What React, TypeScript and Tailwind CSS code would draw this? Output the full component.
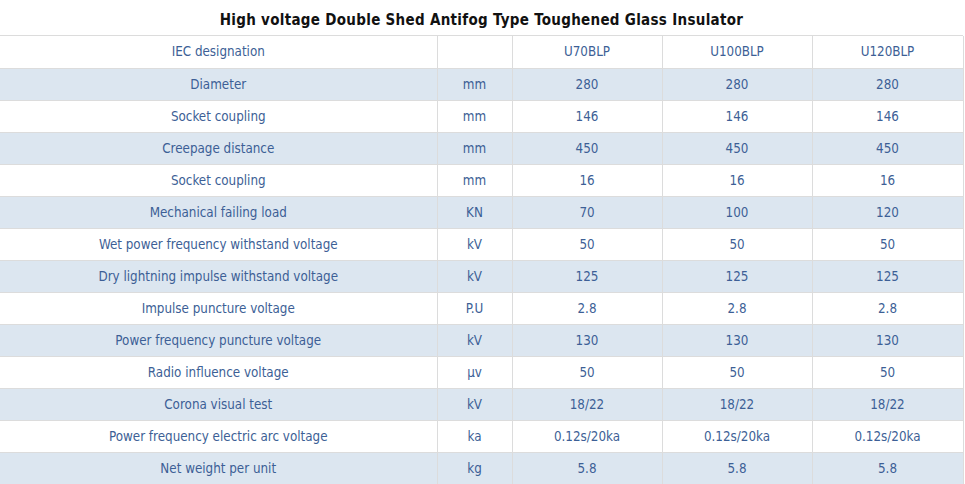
const rows: [string, string, string, string, string][] = [
  ['Diameter', 'mm', '280', '280', '280'],
  ['Socket coupling', 'mm', '146', '146', '146'],
  ['Creepage distance', 'mm', '450', '450', '450'],
  ['Socket coupling', 'mm', '16', '16', '16'],
  ['Mechanical failing load', 'KN', '70', '100', '120'],
  ['Wet power frequency withstand voltage', 'kV', '50', '50', '50'],
  ['Dry lightning impulse withstand voltage', 'kV', '125', '125', '125'],
  ['Impulse puncture voltage', 'P.U', '2.8', '2.8', '2.8'],
  ['Power frequency puncture voltage', 'kV', '130', '130', '130'],
  ['Radio influence voltage', 'μv', '50', '50', '50'],
  ['Corona visual test', 'kV', '18/22', '18/22', '18/22'],
  ['Power frequency electric arc voltage', 'ka', '0.12s/20ka', '0.12s/20ka', '0.12s/20ka'],
  ['Net weight per unit', 'kg', '5.8', '5.8', '5.8'],
];

function App() {
  return (
    <div className="w-[965px] h-[484px] bg-white overflow-hidden font-['DejaVu_Sans_Condensed','DejaVu_Sans',sans-serif]">
      <div className="w-[963px] h-[36px] border-b border-[#dcdcdc] flex items-center justify-center pt-[6px]">
        <h1 className="text-[15px] font-bold text-[#111] tracking-[0.3px]">
          High voltage Double Shed Antifog Type Toughened Glass Insulator
        </h1>
      </div>
      <table className="w-[963px] table-fixed border-collapse text-[13.3px] text-[#3d5f96]">
        <colgroup>
          <col className="w-[437px]" />
          <col className="w-[75px]" />
          <col className="w-[150px]" />
          <col className="w-[150px]" />
          <col className="w-[151px]" />
        </colgroup>
        <tbody>
          <tr className="h-[32px] bg-white">
            <td className="border-r border-b border-[#dcdcdc] text-center p-0 pt-px">IEC designation</td>
            <td className="border-r border-b border-[#dcdcdc] text-center p-0"></td>
            <td className="border-r border-b border-[#dcdcdc] text-center p-0 pt-px">U70BLP</td>
            <td className="border-r border-b border-[#dcdcdc] text-center p-0 pt-px">U100BLP</td>
            <td className="border-r border-b border-[#dcdcdc] text-center p-0 pt-px">U120BLP</td>
          </tr>
          {rows.map((r, i) => (
            <tr key={i} className={i % 2 === 0 ? 'h-[32px] bg-[#dce6f0]' : 'h-[32px] bg-white'}>
              {r.map((c, j) => (
                <td key={j} className="border-r border-b border-[#dcdcdc] text-center p-0 pt-px">
                  {c}
                </td>
              ))}
            </tr>
          ))}
        </tbody>
      </table>
    </div>
  );
}

export default App;
